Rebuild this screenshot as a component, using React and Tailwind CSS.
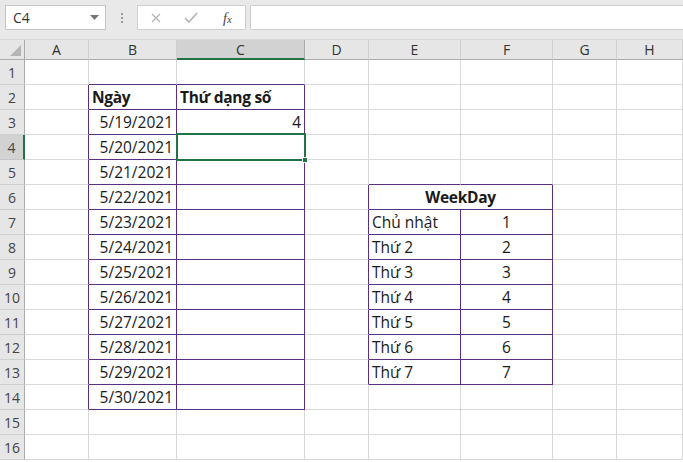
import React from "react";

const COLS = ["A", "B", "C", "D", "E", "F", "G", "H"];
const ROWS = Array.from({ length: 16 }, (_, i) => i + 1);

const dates = [
  "5/19/2021", "5/20/2021", "5/21/2021", "5/22/2021", "5/23/2021", "5/24/2021",
  "5/25/2021", "5/26/2021", "5/27/2021", "5/28/2021", "5/29/2021", "5/30/2021",
];
const days = ["Chủ nhật", "Thứ 2", "Thứ 3", "Thứ 4", "Thứ 5", "Thứ 6", "Thứ 7"];

// cell contents: [text, align, bold]
const cells = {
  B2: ["Ngày", "left", true],
  C2: ["Thứ dạng số", "left", true],
  C3: ["4", "right", false],
  E6: ["WeekDay", "center", true],
};
dates.forEach((d, i) => (cells["B" + (i + 3)] = [d, "right", false]));
days.forEach((d, i) => {
  cells["E" + (i + 7)] = [d, "left", false];
  cells["F" + (i + 7)] = [String(i + 1), "center", false];
});

const inTable = (r, c) =>
  ((c === 2 || c === 3) && r >= 2 && r <= 14) || ((c === 5 || c === 6) && r >= 6 && r <= 13);

const font = { fontFamily: '"Open Sans", "Noto Sans", sans-serif' };

function Cell({ r, c, span }) {
  const key = COLS[c - 1] + r;
  const content = cells[key];
  const lastCol = span ? c + 1 : c;
  const purpleR = inTable(r, lastCol) || inTable(r, lastCol + 1);
  const purpleB = inTable(r, c) || inTable(r + 1, c);
  const align =
    content?.[1] === "right" ? "justify-end pr-[3px]" : content?.[1] === "center" ? "justify-center" : "justify-start pl-[3px]";
  return (
    <div
      className={`relative h-[25px] flex items-center pt-[2px] border-r border-b text-[15.5px] text-[#1a1a1a] whitespace-nowrap ${
        span ? "col-span-2" : ""
      } ${purpleR ? "border-r-[#5a2e80]" : "border-r-[#d9d9d9]"} ${
        purpleB ? "border-b-[#5a2e80]" : "border-b-[#d9d9d9]"
      } ${align} ${content?.[2] ? "font-bold tracking-[-0.3px]" : ""}`}
    >
      {content?.[0]}
      {key === "C4" && (
        <div className="absolute left-[-1px] top-[-2px] right-[-2px] bottom-[-2px] border-2 border-[#217346] z-10">
          <div className="absolute right-[-4px] bottom-[-4px] w-[6px] h-[6px] bg-[#217346] border border-white" />
        </div>
      )}
    </div>
  );
}

export default function App() {
  return (
    <div className="w-[683px] h-[462px] overflow-hidden bg-white" style={font}>
      {/* formula bar */}
      <div className="h-[40px] bg-[#e9e9e9] flex items-start pt-[5px] border-b border-[#d6d6d6]">
        <div className="ml-[5px] w-[101px] h-[25px] bg-white border border-[#c6c6c6] flex items-center pl-[7px] text-[14px] text-[#333] relative">
          C4
          <svg className="absolute right-[6px] top-[9px]" width="9" height="6" viewBox="0 0 9 6">
            <polygon points="0,0 9,0 4.5,5" fill="#767676" />
          </svg>
        </div>
        <div className="w-[31px] h-[25px] flex flex-col items-center justify-center gap-[2px]">
          <span className="w-[2px] h-[2px] bg-[#9a9a9a]" />
          <span className="w-[2px] h-[2px] bg-[#9a9a9a]" />
          <span className="w-[2px] h-[2px] bg-[#9a9a9a]" />
        </div>
        <div className="w-[109px] h-[25px] bg-white border border-[#d0d0d0] flex items-center relative">
          <svg className="absolute left-[13px] top-[7px]" width="10" height="10" viewBox="0 0 10 10">
            <path d="M1 1 L9 9 M9 1 L1 9" stroke="#b3b3b3" strokeWidth="1.3" />
          </svg>
          <svg className="absolute left-[46px] top-[6px]" width="14" height="12" viewBox="0 0 14 12">
            <path d="M1 6 L5 10 L13 1" stroke="#b3b3b3" strokeWidth="1.6" fill="none" />
          </svg>
          <span
            className="absolute left-[85px] top-[2px] text-[14px] italic text-[#444]"
            style={{ fontFamily: '"Liberation Serif", serif' }}
          >
            f<span className="text-[11px]">x</span>
          </span>
        </div>
        <div className="ml-[4px] flex-1 h-[25px] bg-white border border-[#d0d0d0] border-r-0" />
      </div>

      {/* sheet grid */}
      <div className="grid grid-cols-[25px_64px_88px_128px_64px_92px_92px_64px_66px]">
        {/* header row */}
        <div className="relative h-[20px] bg-[#e6e6e6] border-r border-b border-[#ababab]">
          <svg className="absolute right-[3px] bottom-[3px]" width="11" height="11" viewBox="0 0 11 11">
            <polygon points="11,0 11,11 0,11" fill="#b5b5b5" />
          </svg>
        </div>
        {COLS.map((l) =>
          l === "C" ? (
            <div
              key={l}
              className="h-[20px] bg-[#d2d2d2] border-r border-r-[#ababab] border-b-2 border-b-[#217346] flex items-center justify-center text-[14px] text-[#333]"
            >
              {l}
            </div>
          ) : (
            <div
              key={l}
              className="h-[20px] bg-[#e6e6e6] border-r border-r-[#cfcfcf] border-b border-b-[#ababab] flex items-center justify-center text-[14px] text-[#333]"
            >
              {l}
            </div>
          )
        )}

        {ROWS.map((r) => (
          <React.Fragment key={r}>
            {r === 4 ? (
              <div className="h-[25px] bg-[#d2d2d2] border-r-2 border-r-[#217346] border-b border-b-[#c4c4c4] flex items-center justify-center text-[14px] text-[#444]">
                {r}
              </div>
            ) : (
              <div className="h-[25px] bg-[#e6e6e6] border-r border-r-[#ababab] border-b border-b-[#cfcfcf] flex items-center justify-center text-[14px] text-[#444]">
                {r}
              </div>
            )}
            {COLS.map((_, i) => {
              const c = i + 1;
              if (r === 6 && c === 6) return null;
              return <Cell key={c} r={r} c={c} span={r === 6 && c === 5} />;
            })}
          </React.Fragment>
        ))}
      </div>
    </div>
  );
}
